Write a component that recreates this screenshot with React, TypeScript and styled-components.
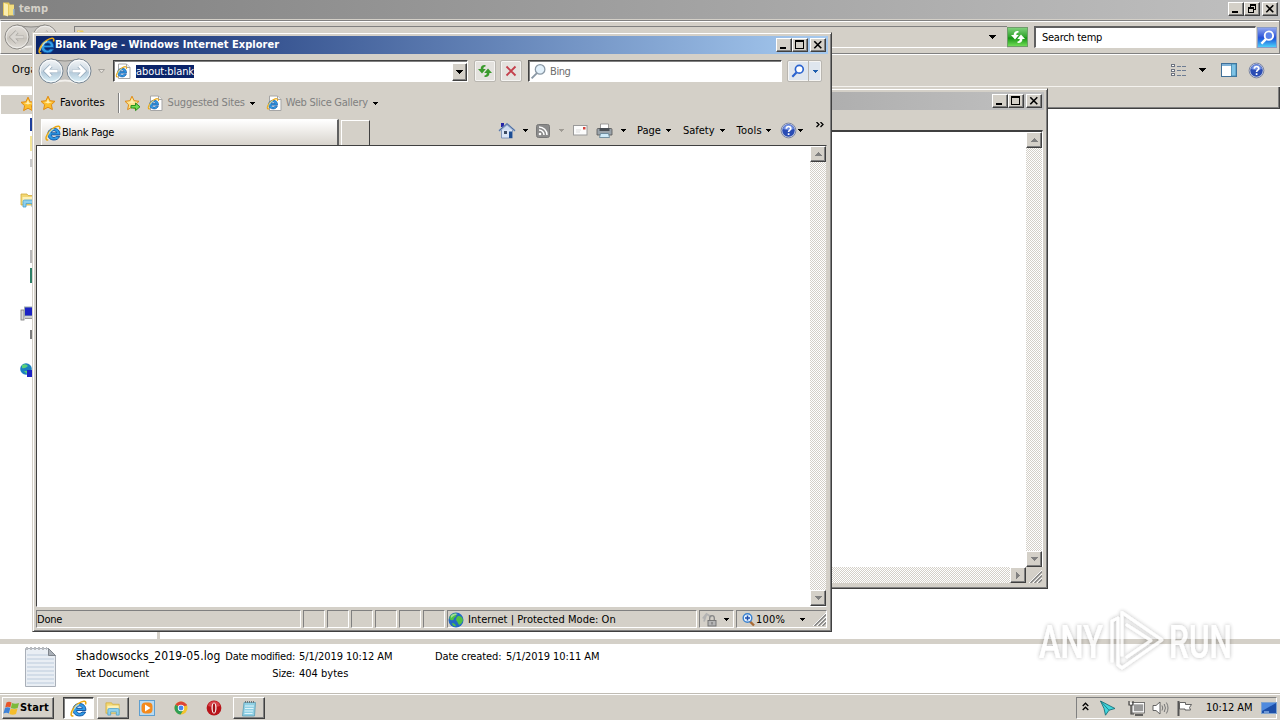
import React from 'react';
import styled, { createGlobalStyle, css } from 'styled-components';

const FACE = '#d4d0c8';
const FONT = '11px/14px Tahoma, "DejaVu Sans Condensed", "Liberation Sans", sans-serif';

const GlobalStyle = createGlobalStyle`
  * { box-sizing: border-box; }
  body { margin: 0; background: #fff; overflow: hidden; font: ${FONT}; color: #000; }
  svg { display: block; flex: none; }
`;

const raised = css`
  background: ${FACE};
  border: 1px solid;
  border-color: #fff #404040 #404040 #fff;
  box-shadow: inset -1px -1px 0 #808080;
`;

/* ---------- shared parts ---------- */

const Label = styled.span<{ $ls?: number; $color?: string; $ml?: number; $bold?: boolean; $size?: number; $mr?: number }>`
  flex: none;
  white-space: nowrap;
  letter-spacing: ${p => p.$ls ?? 0}px;
  color: ${p => p.$color ?? '#000'};
  margin-left: ${p => p.$ml ?? 0}px;
  margin-right: ${p => p.$mr ?? 0}px;
  font-weight: ${p => (p.$bold ? 'bold' : 'normal')};
  font-size: ${p => p.$size ?? 11}px;
`;

const Gap = styled.div<{ $w: number }>`
  flex: none;
  width: ${p => p.$w}px;
`;

const Spacer = styled.div`
  flex: 1;
`;

const Desktop = styled.main`
  position: relative;
  width: 1280px;
  height: 720px;
  overflow: hidden;
  display: flex;
  flex-direction: column;
  background: #fff;
`;

const CaptionBox = styled.span`
  ${raised}
  width: 16px;
  height: 14px;
  display: flex;
  align-items: center;
  justify-content: center;
`;

const CaptionGroup = styled.div`
  display: flex;
  margin-left: auto;
  & > :last-child { margin-left: 2px; }
`;

function Caption({ restore }: { restore?: boolean }) {
  return (
    <CaptionGroup>
      <CaptionBox>
        <svg width="12" height="10" shapeRendering="crispEdges"><rect x="2" y="7" width="6" height="2" /></svg>
      </CaptionBox>
      <CaptionBox>
        {restore ? (
          <svg width="12" height="10" shapeRendering="crispEdges" fill="none" stroke="#000">
            <path d="M4.5 3V.5h5v5H8M4 1.5h6M2.5 3.5h5v5h-5zM2 4.5h6" />
          </svg>
        ) : (
          <svg width="12" height="10" shapeRendering="crispEdges" fill="none" stroke="#000">
            <path d="M1.5 .5h8v8h-8zM1 1.5h9" />
          </svg>
        )}
      </CaptionBox>
      <CaptionBox>
        <svg width="12" height="10" fill="none" stroke="#000" strokeWidth="1.6"><path d="M2.3 1.3l7 7M9.3 1.3l-7 7" /></svg>
      </CaptionBox>
    </CaptionGroup>
  );
}

const Arrow = ({ color = '#000', small }: { color?: string; small?: boolean }) =>
  small ? (
    <svg width="5" height="3" shapeRendering="crispEdges"><path d="M0 0h5v1H4v1H3v1H2V2H1V1H0z" fill={color} /></svg>
  ) : (
    <svg width="7" height="4" shapeRendering="crispEdges"><path d="M0 0h7v1H6v1H5v1H4v1H3V3H2V2H1V1H0z" fill={color} /></svg>
  );

/* ---------- icons ---------- */

const IeGlyph = () => (
  <>
    <path
      d="M14.900 9.900H6.200C6.300 11.600 7.500 12.500 9 12.500c1.100 0 1.900-.4 2.300-1.200h3.300C13.800 13.700 11.800 15 9 15 5.300 15 2.800 12.700 2.800 9.200 2.800 5.700 5.400 3.300 9 3.300c3.800 0 6.100 2.600 5.900 6.600zM11.600 7.800C11.400 6.500 10.400 5.700 9 5.700c-1.400 0-2.400.8-2.700 2.100z"
      fill="#2f9be6"
      stroke="#0d4f9e"
      strokeWidth=".9"
      fillRule="evenodd"
    />
    <path d="M3.200 14.900C.6 15.600.4 12.800 2.400 9.400 5 5 10.600 .8 13.600 1.200c1.500.2 1.500 1.700.9 3" fill="none" stroke="#e9a713" strokeWidth="1.500" />
    <path d="M2.200 13C2 11 4.500 6.800 8.400 4" fill="none" stroke="#fbe27a" strokeWidth=".8" />
    <path d="M4.300 8.500C4.600 6.300 6.300 4.700 8.500 4.400" fill="none" stroke="#a5dcfa" strokeWidth="1" />
  </>
);

const IeMark = ({ size = 16 }: { size?: number }) => (
  <svg width={size} height={size} viewBox="0 0 16 16"><IeGlyph /></svg>
);

const IePage = () => (
  <svg width="17" height="17" viewBox="0 0 17 17">
    <path d="M3.500 1h8l3.500 3.500v11h-11.500z" fill="#fff" stroke="#a5a5a5" />
    <path d="M11.500 1v3.500H15" fill="#eee" stroke="#a5a5a5" />
    <g transform="translate(.5 2.800) scale(.74)"><IeGlyph /></g>
  </svg>
);

const Star = ({ add }: { add?: boolean }) => (
  <svg width="17" height="17" viewBox="0 0 17 17">
    <path d="M8 1.2l2.1 4.5 4.9.6-3.6 3.4 1 4.9L8 12.2l-4.4 2.4 1-4.9L1 6.3l4.9-.6z" fill={add ? '#fbe08a' : '#fcbf2c'} stroke="#e08b14" strokeWidth="1" strokeLinejoin="round" />
    <path d="M8 3.500L9.200 6.700l3 .4L8 8.500l-4-1.400 2.700-.4z" fill="#ffeeb0" />
    {add && <path d="M7 10.500h4.500V8l4.500 3.800-4.500 3.800v-2.600H7z" fill="#6fdc4f" stroke="#2c8f1f" strokeWidth="1" />}
  </svg>
);

const NavPair = ({ dim }: { dim?: boolean }) => (
  <svg width="56" height="28" viewBox="0 0 56 28">
    <defs>
      <linearGradient id={dim ? 'nd' : 'nb'} x1="0" y1="0" x2="0" y2="1">
        <stop offset="0" stopColor={dim ? '#e2dfda' : '#f4f6f8'} />
        <stop offset=".5" stopColor={dim ? '#cfcbc4' : '#ccd8e2'} />
        <stop offset=".55" stopColor={dim ? '#c6c2ba' : '#b4c9d9'} />
        <stop offset="1" stopColor={dim ? '#e2dfda' : '#dff4fb'} />
      </linearGradient>
    </defs>
    <path d="M14 2Q28 5 42 2V26Q28 22 14 26z" fill="#c4c2be" />
    <path d="M14 2Q28 6 42 2" stroke="#8e8c88" fill="none" />
    <path d="M16 26Q28 21 40 26" stroke="#f2f0ec" strokeWidth="2" fill="none" />
    {[14, 42].map(cx => (
      <g key={cx}>
        <circle cx={cx} cy="14" r="12" fill={`url(#${dim ? 'nd' : 'nb'})`} stroke={dim ? '#8f8d89' : '#7c8894'} />
        <circle cx={cx} cy="14" r="10.800" fill="none" stroke="#fff" strokeOpacity={dim ? 0.5 : 0.85} />
      </g>
    ))}
    <path d="M20.500 14H9.500M14 8.700L8.800 14l5.200 5.300" fill="none" stroke={dim ? '#a5a29d' : '#8fa5b8'} strokeWidth="4.200" />
    <path d="M20.500 14H9.500M14 8.700L8.800 14l5.200 5.300" fill="none" stroke={dim ? '#d9d6d1' : '#fff'} strokeWidth="2.800" />
    <path d="M35.500 14h11M42 8.700l5.200 5.300-5.200 5.300" fill="none" stroke={dim ? '#a5a29d' : '#8fa5b8'} strokeWidth="4.200" />
    <path d="M35.500 14h11M42 8.700l5.200 5.300-5.200 5.300" fill="none" stroke={dim ? '#d9d6d1' : '#fff'} strokeWidth="2.800" />
  </svg>
);

const RefreshArrows = ({ color }: { color: string }) => (
  <svg width="16" height="14" viewBox="0 0 16 14">
    <path d="M8.500 1C5.500 .6 3.600 2.200 3.700 5H1l4 4.400L8.800 5H6.300c0-1.500.7-2.300 2.200-2.500z" fill={color} />
    <path d="M7.500 13c3 .4 5-1.200 4.900-4H15L11 4.600 7.200 9h2.600c0 1.500-.8 2.300-2.300 2.500z" fill={color} />
  </svg>
);

const Magnifier = ({ color, glass = 'none', w = 2, size = 16 }: { color: string; glass?: string; w?: number; size?: number }) => (
  <svg width={size} height={size} viewBox="0 0 16 16">
    <path d="M6.500 9.500L1.500 14.500" stroke={color} strokeWidth={w + 0.6} />
    <circle cx="9.500" cy="6" r="4.500" fill={glass} stroke={color} strokeWidth={w} />
  </svg>
);

const HelpDot = () => (
  <svg width="17" height="17" viewBox="0 0 17 17">
    <circle cx="8.500" cy="8.500" r="7.400" fill="#c9cfe0" stroke="#7d87a5" />
    <circle cx="8.500" cy="8.500" r="6.200" fill="#2a4cb4" />
    <path d="M3 7a5.600 5.600 0 0 1 11 0q-5.500 2-11 0z" fill="#6f8de0" />
    <path d="M6.300 6.800c0-3 4.500-3 4.500-.3 0 1.700-2.200 1.700-2.200 3.400M8.600 11.200v1.700" stroke="#fff" strokeWidth="1.700" fill="none" />
  </svg>
);

const FolderIcon = () => (
  <svg width="16" height="16" viewBox="0 0 16 16">
    <path d="M2 1.500h6l1 2h4v11H2z" fill="#e8c95b" />
    <path d="M3 2l4 1.500v12L3 14z" fill="#fbeeb0" />
    <path d="M8 4h5v10H8z" fill="#f3dd7f" />
    <path d="M12 8h1.500v6H12z" fill="#9cb8c9" />
  </svg>
);

const LibraryIcon = ({ size = 18 }: { size?: number }) => (
  <svg width={size} height={size} viewBox="0 0 18 18">
    <path d="M1 3h6l1 1.500h7V14H1z" fill="#f2d772" stroke="#d2ab3c" strokeWidth=".8" />
    <path d="M2.500 6h12v7h-12z" fill="#fdf1b8" />
    <path d="M3 16V10.500q0-1.500 1.500-1.500h9q1.500 0 1.500 1.500V16h-3v-3.500H6V16z" fill="#8ed0ee" stroke="#4a9fc9" strokeWidth=".8" />
  </svg>
);

const HomeIcon = () => (
  <svg width="18" height="17" viewBox="0 0 18 17">
    <path d="M3.500 7.500h11V16h-11z" fill="#dce6f5" stroke="#6f87b0" strokeWidth=".8" />
    <path d="M3 1h3v4H3z" fill="#2424a8" />
    <path d="M9 2.500L15 8H3z" fill="#cfdcef" />
    <path d="M1 9l8-7 8 7" fill="none" stroke="#8fa6c8" strokeWidth="2" />
    <path d="M1 8.700l8-7 8 7" fill="none" stroke="#31538e" strokeWidth=".7" />
    <path d="M11 9.500h3V16h-3z" fill="#1c4d93" />
    <path d="M6 9h3v3H6z" fill="#3f4d63" />
  </svg>
);

const RssIcon = () => (
  <svg width="14" height="14" viewBox="0 0 14 14">
    <rect x=".5" y=".5" width="13" height="13" rx="2" fill="#8b8b8b" stroke="#777" />
    <circle cx="4" cy="10" r="1.300" fill="#fff" />
    <path d="M3 6a5 5 0 0 1 5 5M3 3a8 8 0 0 1 8 8" fill="none" stroke="#fff" strokeWidth="1.500" />
  </svg>
);

const MailIcon = () => (
  <svg width="15" height="11" viewBox="0 0 15 11">
    <rect x=".5" y=".5" width="13.500" height="9.500" fill="#fcfcfc" stroke="#9a9a9a" />
    <rect x="10" y="2" width="2.500" height="2.500" fill="#d4453c" />
    <path d="M3 5h5M3 7h4" stroke="#ddd" />
  </svg>
);

const PrinterIcon = () => (
  <svg width="17" height="16" viewBox="0 0 17 16">
    <path d="M4.500 1h8v5h-8z" fill="#fff" stroke="#888" strokeWidth=".8" />
    <path d="M1 6.500q0-1 1-1h13q1 0 1 1V12H1z" fill="#9aa3aa" stroke="#555" strokeWidth=".8" />
    <path d="M3.500 5h10v3h-10z" fill="#4a4f55" />
    <path d="M4.500 10.500h8l1 4h-10z" fill="#cfeaf8" stroke="#5d7d90" strokeWidth=".8" />
  </svg>
);

const Globe = ({ size = 16 }: { size?: number }) => (
  <svg width={size} height={size} viewBox="0 0 16 16">
    <circle cx="8" cy="8" r="7.500" fill="#2468c4" />
    <path d="M2 4Q5 .5 8.500 1.500 9 4 6 6 6 9 3 8 .5 7 2 4zM10 4q4-.5 5 4-1 4-4 5-2-4-3-5 0-3 2-4zM4 11q3 0 4 3-3 1-4-3z" fill="#4fc244" />
    <path d="M3 3.500Q6 .5 10 2 6 3 3 6z" fill="#fff" fillOpacity=".45" />
  </svg>
);

const Grip = () => (
  <svg width="13" height="13" viewBox="0 0 13 13">
    <path d="M0 13L13 0M4 13l9-9M8 13l5-5" stroke="#fff" strokeWidth="1" />
    <path d="M1.500 13L13 1.500M5.500 13L13 5.500M9.500 13L13 9.500" stroke="#808080" strokeWidth="1.300" />
  </svg>
);

/* ---------- scroll bars ---------- */

const dither = css`
  background: repeating-conic-gradient(#fff 0 25%, ${FACE} 0 50%) 0 0 / 2px 2px;
`;

const ScrollColumn = styled.div`
  ${dither}
  width: 16px;
  display: flex;
  flex-direction: column;
  justify-content: space-between;
  flex: none;
`;

const ScrollButton = styled.div`
  ${raised}
  width: 16px;
  height: 16px;
  display: flex;
  align-items: center;
  justify-content: center;
`;

const Up = () => <svg width="7" height="4" shapeRendering="crispEdges"><path d="M3 0h1v1h1v1h1v1h1v1H0V3h1V2h1V1h1z" fill="#808080" /></svg>;
const Right = () => <svg width="4" height="7" shapeRendering="crispEdges"><path d="M0 0h1v1h1v1h1v1h1v1H3v1H2v1H1v1H0z" fill="#808080" /></svg>;

const VScroll = () => (
  <ScrollColumn>
    <ScrollButton><Up /></ScrollButton>
    <ScrollButton><Arrow color="#808080" /></ScrollButton>
  </ScrollColumn>
);

/* ---------- explorer (maximised) ---------- */

const Explorer = styled.section`
  flex: 1;
  display: flex;
  flex-direction: column;
`;

const ExplorerTitle = styled.header`
  height: 19px;
  display: flex;
  align-items: center;
  padding: 0 2px 1px 1px;
  background: linear-gradient(90deg, #808080, #c0c0c0);
`;

const AddressBand = styled.div`
  height: 34px;
  margin-top: 1px;
  border: 1px solid #808080;
  border-left-color: #fff;
  background: ${FACE};
  box-shadow: inset 0 1px 0 #fff, 0 1px 0 #fff;
  display: flex;
  align-items: center;
  padding: 0 2px 0 2px;
  outline: 1px solid ${FACE};
`;

const PathBox = styled.div`
  flex: 1;
  height: 22px;
  margin-left: 15px;
  border: 1px solid #808080;
  border-bottom-color: #fff;
  border-right: 0;
  display: flex;
  align-items: center;
`;

const GreenButton = styled.div`
  width: 21px;
  height: 20px;
  border: 1px solid #6f9d6a;
  background: linear-gradient(#7fd07a, #2fa32c 50%, #149313 55%, #6fdc55);
  display: flex;
  align-items: center;
  justify-content: center;
`;

const ExplorerSearch = styled.div`
  width: 222px;
  height: 22px;
  margin-left: 6px;
  border: 1px solid;
  border-width: 2px 1px 1px 2px;
  border-color: #606060 #fff #fff #606060;
  background: #fff;
  display: flex;
  align-items: center;
  padding-left: 6px;
`;

const BlueButton = styled.div`
  width: 20px;
  height: 21px;
  margin-left: 1px;
  border: 1px solid #8a9cc8;
  background: linear-gradient(#8fa5ee, #2b53d8 50%, #1e63e0 60%, #4fd0f8);
  display: flex;
  align-items: center;
  justify-content: center;
`;

const CommandBand = styled.div`
  height: 33px;
  background: ${FACE};
  border-bottom: 1px solid #f4f2ee;
  border-top: 1px solid #fff;
  display: flex;
  align-items: center;
  padding: 0 15px 1px 12px;
`;

const ExplorerBody = styled.div`
  flex: 1;
  display: flex;
`;

const NavPane = styled.nav`
  width: 160px;
  border-right: 3px solid ${FACE};
  padding-top: 8px;
`;

const NavItem = styled.div<{ $top?: number; $active?: boolean; $pad?: number }>`
  height: 19px;
  margin-left: 1px;
  margin-top: ${p => p.$top ?? 0}px;
  padding-left: ${p => p.$pad ?? 18}px;
  display: flex;
  align-items: center;
  background: ${p => (p.$active ? FACE : 'transparent')};
`;

const NavChip = styled.i<{ $c: string; $h?: number }>`
  width: 12px;
  height: ${p => p.$h ?? 13}px;
  background: ${p => p.$c};
`;

const FilePane = styled.div`
  flex: 1;
  background: #fff;
`;

const ColumnHeader = styled.div`
  height: 22px;
  ${raised}
  border-left: 0;
  border-top: 0;
`;

const DetailsPane = styled.footer`
  height: 54px;
  border-top: 5px solid ${FACE};
  background: #fff;
  display: flex;
  padding: 2px 0 0 24px;
`;

const FileMeta = styled.div`
  margin-left: 19px;
  padding-top: 3px;
  display: grid;
  grid-template-columns: 150px 69px 2px 134px 71px 100px;
  grid-auto-rows: 18px;
  row-gap: 0;
  align-items: baseline;
  align-content: start;
`;

const MetaName = styled.div`
  text-align: right;
  white-space: nowrap;
  display: flex;
  justify-content: flex-end;
`;

/* ---------- floating windows ---------- */

const Frame = styled.section<{ $x: number; $y: number; $w: number; $h: number }>`
  position: absolute;
  left: ${p => p.$x}px;
  top: ${p => p.$y}px;
  width: ${p => p.$w}px;
  height: ${p => p.$h}px;
  background: ${FACE};
  border: 1px solid;
  border-color: ${FACE} #404040 #404040 ${FACE};
  box-shadow: inset 1px 1px 0 #fff, inset -1px -1px 0 #808080;
  padding: 3px;
  display: flex;
  flex-direction: column;
`;

const TitleBar = styled.header<{ $from: string; $to: string }>`
  height: 18px;
  flex: none;
  display: flex;
  align-items: center;
  padding: 0 2px;
  background: linear-gradient(90deg, ${p => p.$from}, ${p => p.$to});
`;

const MenuStrip = styled.div`
  height: 20px;
  flex: none;
`;

const EditArea = styled.div`
  flex: 1;
  display: flex;
  margin-right: 1px;
  border: 1px solid #808080;
  border-top: 2px solid #404040;
  border-right-color: #fff;
  border-bottom: 0;
  background: #fff;
`;

const EditText = styled.div`
  flex: 1;
  background: #fff;
`;

const BottomRow = styled.div`
  height: 16px;
  flex: none;
  display: flex;
  margin-bottom: 2px;
  margin-right: 2px;
`;

const HTrack = styled.div`
  ${dither}
  flex: 1;
  display: flex;
  justify-content: flex-end;
`;

const GripCell = styled.div`
  width: 16px;
  display: flex;
  align-items: flex-end;
  justify-content: flex-end;
`;

/* ---------- browser ---------- */

const NavRow = styled.div`
  height: 34px;
  flex: none;
  display: flex;
  align-items: center;
  padding-left: 1px;
`;

const Field = styled.div<{ $w: number; $ml: number }>`
  width: ${p => p.$w}px;
  height: 22px;
  flex: none;
  margin-left: ${p => p.$ml}px;
  background: #fff;
  border: 1px solid;
  border-color: #404040 #fff #fff #404040;
  box-shadow: inset 1px 1px 0 #808080;
  display: flex;
  align-items: center;
  padding: 1px 0 0 1px;
`;

const Selected = styled(Label)`
  background: #0a246a;
  margin-left: 4px;
  height: 13px;
  line-height: 13px;
`;

const DropButton = styled.div`
  ${raised}
  width: 15px;
  height: 18px;
  margin-left: auto;
  display: flex;
  align-items: center;
  justify-content: center;
`;

const ToolButton = styled.div<{ $w: number; $ml: number; $blue?: boolean }>`
  width: ${p => p.$w}px;
  height: 22px;
  margin-left: ${p => p.$ml}px;
  flex: none;
  border: 1px solid #b9b6b0;
  border-radius: 2px;
  box-shadow: inset 0 0 0 1px #f6f5f3;
  background: ${p => (p.$blue ? '#dfe6ee' : '#e4e2de')};
  display: flex;
  align-items: center;
  justify-content: center;
`;

const SplitHalf = styled.div<{ $w: number; $line?: boolean }>`
  width: ${p => p.$w}px;
  height: 20px;
  display: flex;
  align-items: center;
  justify-content: center;
  border-left: ${p => (p.$line ? '1px solid #b9b6b0' : '0')};
`;

const FavRow = styled.div`
  height: 29px;
  flex: none;
  display: flex;
  align-items: center;
  padding: 1px 0 0 4px;
`;

const Divider = styled.div`
  width: 2px;
  height: 20px;
  border-left: 1px solid #808080;
  border-right: 1px solid #fff;
`;

const TabRow = styled.div`
  height: 28px;
  flex: none;
  display: flex;
  align-items: flex-end;
  padding-left: 5px;
`;

const Tab = styled.div`
  width: 298px;
  height: 26px;
  border: 1px solid #fff;
  border-bottom: 0;
  border-right: 2px solid #606060;
  background: linear-gradient(#fff, #f0eeeb 40%, #d8d4cd);
  display: flex;
  align-items: center;
  padding: 1px 0 0 3px;
`;

const NewTab = styled.div`
  width: 29px;
  height: 25px;
  margin-left: 2px;
  border: 1px solid #fff;
  border-bottom: 0;
  border-right: 1px solid #404040;
`;

const CommandBar = styled.div`
  flex: 1;
  height: 28px;
  display: flex;
  align-items: center;
  padding: 0 4px 1px 0;
`;

const Viewport = styled.div`
  flex: 1;
  display: flex;
  margin-right: 1px;
  border: 1px solid #404040;
  border-right-color: ${FACE};
  border-bottom-color: #fff;
  box-shadow: inset 0 1px 0 #808080;
  background: #fff;
`;

const StatusBar = styled.div`
  height: 18px;
  flex: none;
  margin-top: 3px;
  display: flex;
  align-items: center;
  gap: 2px;
`;

const StatusCell = styled.div<{ $w: number }>`
  width: ${p => p.$w}px;
  height: 18px;
  flex: none;
  display: flex;
  align-items: center;
  border: 1px solid #808080;
  border-right-color: #fff;
  border-bottom-color: #fff;
  padding-top: 1px;
`;

/* ---------- taskbar ---------- */

const Taskbar = styled.div`
  height: 27px;
  flex: none;
  background: ${FACE};
  border-top: 1px solid #c0bcb4;
  box-shadow: inset 0 1px 0 #fff;
  display: flex;
  align-items: center;
  padding: 2px 3px 0 2px;
`;

const StartButton = styled.div`
  ${raised}
  width: 52px;
  height: 22px;
  display: flex;
  align-items: center;
`;

const TaskButton = styled.div<{ $ml?: number; $w?: number; $state?: 'open' | 'active' }>`
  width: ${p => p.$w ?? 31}px;
  height: 22px;
  margin-left: ${p => p.$ml ?? 0}px;
  display: flex;
  align-items: center;
  justify-content: center;
  ${p => p.$state === 'open' && raised}
  ${p =>
    p.$state === 'active' &&
    css`
      background: #fff;
      border: 1px solid;
      border-color: #404040 #fff #fff #404040;
      box-shadow: inset 1px 1px 0 #808080;
    `}
`;

const Tray = styled.div`
  width: 201px;
  height: 22px;
  margin-left: auto;
  border: 1px solid #808080;
  border-right-color: #fff;
  border-bottom-color: #fff;
  display: flex;
  align-items: center;
  padding-left: 5px;
`;

const Watermark = styled.div`
  position: absolute;
  left: 1030px;
  top: 600px;
  pointer-events: none;
`;

function ExplorerWindow() {
  return (
    <Explorer>
      <ExplorerTitle>
        <FolderIcon />
        <Label $bold $color={FACE} $ls={0.04} $ml={2}>temp</Label>
        <Caption restore />
      </ExplorerTitle>
      <AddressBand>
        <NavPair dim />
        <PathBox>
          <FolderIcon />
          <Spacer />
          <Arrow />
          <Gap $w={11} />
        </PathBox>
        <GreenButton><RefreshArrows color="#fff" /></GreenButton>
        <ExplorerSearch><Label $ls={-0.27}>Search temp</Label></ExplorerSearch>
        <BlueButton><Magnifier color="#fff" glass="#5b83ea" size={15} /></BlueButton>
      </AddressBand>
      <CommandBand>
        <Label $ls={0.2}>Organize</Label>
        <Spacer />
        <svg width="16" height="13" viewBox="0 0 16 13" shapeRendering="crispEdges">
          <path d="M1.500 .5h3v2h-3zM1.500 5h3v2h-3zM1.500 9.500h3v2h-3z" fill="#fff" stroke="#6d7380" />
          <path d="M7 2h4M12 2h4M7 6.500h4M12 6.500h4M7 11h4M12 11h4" stroke="#6d7c93" />
        </svg>
        <Gap $w={13} />
        <Arrow />
        <Gap $w={15} />
        <svg width="16" height="14" viewBox="0 0 16 14">
          <rect x=".5" y=".5" width="15" height="13" fill="#fff" stroke="#3f6f98" />
          <path d="M1 2h14" stroke="#7fb2d8" strokeWidth="2" />
          <rect x="10.500" y="1" width="4.500" height="12" fill="#7ec3e6" stroke="#3f85ab" strokeWidth=".8" />
        </svg>
        <Gap $w={11} />
        <HelpDot />
      </CommandBand>
      <ExplorerBody>
        <NavPane>
          <NavItem $active $pad={19}><Star /></NavItem>
          <NavItem $pad={29} $top={1}><NavChip $c="#1f3f9c" /></NavItem>
          <NavItem $pad={29}><NavChip $c="#f3e59a" $h={15} /></NavItem>
          <NavItem $pad={29}><NavChip $c="#c9c9c9" $h={8} /></NavItem>
          <NavItem $pad={19} $top={18}><LibraryIcon /></NavItem>
          <NavItem $pad={29} $top={38}><NavChip $c="#b8b8b8" /></NavItem>
          <NavItem $pad={29}><NavChip $c="#2e7f66" $h={15} /></NavItem>
          <NavItem $top={19}>
            <svg width="18" height="16" viewBox="0 0 18 16">
              <rect x="2" y="4" width="3" height="10" fill="#d8d8d8" stroke="#777" strokeWidth=".8" />
              <rect x="5.500" y="1" width="12" height="9" fill="#1b22c4" stroke="#9aa" />
              <path d="M6 13h10v-1.500H6z" fill="#999" />
            </svg>
          </NavItem>
          <NavItem $pad={29} $top={2}><NavChip $c="#7c7c7c" $h={9} /></NavItem>
          <NavItem $top={17}>
            <svg width="18" height="18" viewBox="0 0 18 18">
              <circle cx="7" cy="7" r="5.800" fill="#1b7fc0" />
              <path d="M3 3q4-2 6 1-3 3-6 2zM5 9h4l-1 3z" fill="#59d07a" />
              <rect x="8" y="8" width="9" height="7" fill="#1b22c4" />
            </svg>
          </NavItem>
        </NavPane>
        <FilePane><ColumnHeader /></FilePane>
      </ExplorerBody>
      <DetailsPane>
        <svg width="33" height="42" viewBox="0 0 33 42">
          <path d="M1.500 2.500h23l7 7v31h-30z" fill="#e9eef4" stroke="#a9afb8" />
          <path d="M3 9h22M3 13h27M3 17h27M3 21h27M3 25h27M3 29h27M3 33h27M3 37h27" stroke="#bccbdc" />
          <path d="M24.500 2.500v7h7z" fill="#aab0b8" stroke="#7f858c" />
          <path d="M2 2.500h21" stroke="#b9bcc0" strokeDasharray="2 2" strokeWidth="3" />
        </svg>
        <FileMeta>
          <Label $size={12} $ls={0.12}>shadowsocks_2019-05.log</Label>
          <MetaName><Label $ls={-0.27}>Date modified:</Label></MetaName>
          <i />
          <Label $ls={-0.07} $ml={2}>5/1/2019 10:12 AM</Label>
          <Label $ml={4} $ls={-0.1}>Date created:</Label>
          <Label $ml={4} $ls={-0.07}>5/1/2019 10:11 AM</Label>
          <Label $ls={-0.09}>Text Document</Label>
          <MetaName><Label $ls={-0.2}>Size:</Label></MetaName>
          <i />
          <Label $ml={2}>404 bytes</Label>
        </FileMeta>
      </DetailsPane>
    </Explorer>
  );
}

function NotepadWindow() {
  return (
    <Frame $x={250} $y={88} $w={798} $h={501}>
      <TitleBar $from="#808080" $to="#c0c0c0"><Caption /></TitleBar>
      <MenuStrip />
      <EditArea>
        <EditText />
        <VScroll />
      </EditArea>
      <BottomRow>
        <HTrack><ScrollButton><Right /></ScrollButton></HTrack>
        <GripCell><Grip /></GripCell>
      </BottomRow>
    </Frame>
  );
}

function BrowserWindow() {
  return (
    <Frame $x={32} $y={32} $w={800} $h={600}>
      <TitleBar $from="#0a246a" $to="#a6caf0">
        <IeMark size={17} />
        <Label $bold $color="#fff" $ls={0.04}>Blank Page - Windows Internet Explorer</Label>
        <Caption />
      </TitleBar>
      <NavRow>
        <NavPair />
        <Gap $w={5} />
        <svg width="7" height="5" viewBox="0 0 7 5"><path d="M.5 .5h6L3.500 4z" fill="#e4e1dc" stroke="#a5a29c" /></svg>
        <Field $w={355} $ml={8}>
          <IePage />
          <Selected $color="#fff" $ls={-0.09}>about:blank</Selected>
          <DropButton><Arrow /></DropButton>
        </Field>
        <ToolButton $w={22} $ml={6}><RefreshArrows color="#3a9a2c" /></ToolButton>
        <ToolButton $w={22} $ml={4}>
          <svg width="12" height="12" viewBox="0 0 12 12"><path d="M1.500 1.500l9 9M10.500 1.500l-9 9" stroke="#c4404c" strokeWidth="1.900" /></svg>
        </ToolButton>
        <Field $w={254} $ml={6}>
          <Magnifier color="#8a98a5" glass="#e3f1fb" w={1.2} size={17} />
          <Label $color="#6d6d6d" $ml={3} $ls={-0.4}>Bing</Label>
        </Field>
        <ToolButton $w={35} $ml={5} $blue>
          <SplitHalf $w={20}><Magnifier color="#2a63cf" glass="#fff" w={1.9} size={14} /></SplitHalf>
          <SplitHalf $w={13} $line><Arrow small color="#1f5fae" /></SplitHalf>
        </ToolButton>
      </NavRow>
      <FavRow>
        <Star />
        <Label $ml={3}>Favorites</Label>
        <Gap $w={13} />
        <Divider />
        <Gap $w={4} />
        <Star add />
        <Gap $w={6} />
        <IePage />
        <Label $color="#808080" $ml={4} $ls={-0.18} $mr={5}>Suggested Sites</Label>
        <Arrow small />
        <Gap $w={11} />
        <IePage />
        <Label $color="#808080" $ml={3} $ls={-0.26} $mr={5}>Web Slice Gallery</Label>
        <Arrow small />
      </FavRow>
      <TabRow>
        <Tab>
          <IeMark size={16} />
          <Label $ls={-0.26} $ml={1}>Blank Page</Label>
        </Tab>
        <NewTab />
        <CommandBar>
          <Spacer />
          <HomeIcon />
          <Gap $w={7} />
          <Arrow small />
          <Gap $w={8} />
          <RssIcon />
          <Gap $w={9} />
          <Arrow small color="#a09c95" />
          <Gap $w={9} />
          <MailIcon />
          <Gap $w={8} />
          <PrinterIcon />
          <Gap $w={8} />
          <Arrow small />
          <Label $ml={11} $mr={5}>Page</Label>
          <Arrow small />
          <Label $ml={12} $mr={5}>Safety</Label>
          <Arrow small />
          <Label $ml={12} $ls={0.25} $mr={4}>Tools</Label>
          <Arrow small />
          <Gap $w={9} />
          <HelpDot />
          <Gap $w={1} />
          <Arrow small />
          <Gap $w={13} />
          <svg width="8" height="18" viewBox="0 0 8 18"><path d="M.5 -.5l2.500 2.500L.5 4.500M4.500 -.5L7 2 4.500 4.500" fill="none" stroke="#000" strokeWidth="1.300" transform="translate(0 .5)" /></svg>
        </CommandBar>
      </TabRow>
      <Viewport>
        <EditText />
        <VScroll />
      </Viewport>
      <StatusBar>
        <StatusCell $w={265}><Label $ls={-0.2}>Done</Label></StatusCell>
        <StatusCell $w={22} />
        <StatusCell $w={22} />
        <StatusCell $w={22} />
        <StatusCell $w={22} />
        <StatusCell $w={22} />
        <StatusCell $w={22} />
        <StatusCell $w={250}>
          <Globe />
          <Label $ml={4} $ls={0.03}>Internet | Protected Mode: On</Label>
        </StatusCell>
        <StatusCell $w={35}>
          <Gap $w={2} />
          <svg width="16" height="16" viewBox="0 0 16 16">
            <path d="M.8 6.500L4.500 2l5 3M4.500 2L2 9.500" fill="none" stroke="#b3b3b3" strokeWidth="1.800" />
            <rect x="6" y="8.500" width="8" height="5.500" fill="#b5b5b5" stroke="#6f6f6f" strokeWidth=".9" />
            <path d="M7.700 8V6a2.300 2.300 0 0 1 4.600 0v2" fill="none" stroke="#858585" strokeWidth="1.300" />
            <path d="M10 10v2.500" stroke="#666" />
          </svg>
          <Gap $w={6} />
          <Arrow small />
        </StatusCell>
        <StatusCell $w={91}>
          <Gap $w={5} />
          <svg width="14" height="14" viewBox="0 0 14 14">
            <path d="M7.500 8l4.500 4.500" stroke="#a86a35" strokeWidth="2.400" />
            <circle cx="5.500" cy="5" r="4.300" fill="#e6f3ff" stroke="#3b82cf" strokeWidth="1.400" />
            <path d="M5.500 2.500v5M3 5h5" stroke="#1d4fae" strokeWidth="1.500" />
          </svg>
          <Label $ls={0.2}>100%</Label>
          <Gap $w={15} />
          <Arrow small />
          <Spacer />
          <Grip />
        </StatusCell>
      </StatusBar>
    </Frame>
  );
}

function TaskbarStrip() {
  return (
    <Taskbar>
      <StartButton>
        <svg width="17" height="16" viewBox="0 0 17 16">
          <path d="M3.500 2.500Q6 1 8.500 2.500L7.300 7.500Q5 6.200 2.200 7.500z" fill="#e8552a" />
          <path d="M9 3Q12 4.500 16 3L14.700 8Q11.500 9.300 7.900 8z" fill="#7cba3a" />
          <path d="M2 8Q4.500 6.700 7.300 8L5.900 13.500Q3.500 12.200.4 13.500z" fill="#3f83d8" />
          <path d="M7.700 8.500Q11 10 14.500 8.500L13 14Q10 15.300 6.300 14z" fill="#f4bd2c" />
        </svg>
        <Label $bold $ls={0.15}>Start</Label>
      </StartButton>
      <TaskButton $ml={9} $state="active"><IeMark size={17} /></TaskButton>
      <TaskButton $ml={3} $w={32} $state="open"><LibraryIcon size={17} /></TaskButton>
      <TaskButton $ml={2}>
        <svg width="16" height="16" viewBox="0 0 16 16">
          <rect x=".5" y=".5" width="15" height="15" fill="#b8daf2" stroke="#5e9fd0" />
          <rect x="2.500" y="2.500" width="11" height="11" rx="4" fill="#f48a1d" />
          <path d="M6 4.500L11.500 8 6 11.500z" fill="#fff" />
        </svg>
      </TaskButton>
      <TaskButton $ml={3}>
        <svg width="14" height="14" viewBox="0 0 14 14">
          <circle cx="7" cy="7" r="6.500" fill="#f2c32e" />
          <path d="M7 7L1.400 3.800A6.500 6.500 0 0 1 12.600 3.800z" fill="#dc4437" />
          <path d="M7 7L1.400 3.700A6.500 6.500 0 0 0 6.600 13.500l3-5z" fill="#2f9e55" />
          <path d="M7 4h5.700" stroke="#dc4437" strokeWidth="1.500" />
          <circle cx="7" cy="7" r="3.200" fill="#fff" />
          <circle cx="7" cy="7" r="2.400" fill="#4585ee" />
        </svg>
      </TaskButton>
      <TaskButton $ml={2}>
        <svg width="16" height="16" viewBox="0 0 16 16">
          <circle cx="8" cy="8" r="7.400" fill="#b8141a" />
          <path d="M2 6a6.200 6.200 0 0 1 12 0q-6 2-12 0z" fill="#d8434a" />
          <ellipse cx="8" cy="8" rx="2.500" ry="5.600" fill="#fff" />
          <ellipse cx="8" cy="8" rx="1.300" ry="4.700" fill="#a51116" />
        </svg>
      </TaskButton>
      <TaskButton $ml={4} $w={32} $state="open">
        <svg width="16" height="17" viewBox="0 0 16 17">
          <path d="M3 2.500h11.500l-1 13.500H1.500z" fill="#8fd0e4" stroke="#5a9db5" strokeWidth=".8" />
          <path d="M4 6h9M4 8.500h8.500M3.500 11h8.500M3.500 13.500h8" stroke="#dff4fa" />
          <path d="M4 2h10" stroke="#6d767a" strokeDasharray="1 1" strokeWidth="2" />
        </svg>
      </TaskButton>
      <Tray>
        <svg width="7" height="12" viewBox="0 0 7 12"><path d="M.7 4l2.800-2.800L6.300 4M.7 8l2.800-2.800L6.300 8" fill="none" stroke="#000" strokeWidth="1.300" /></svg>
        <Gap $w={10} />
        <svg width="17" height="16" viewBox="0 0 17 16">
          <path d="M1.500 1L16 8.500l-6 1.700-3.500 5L5 8.500z" fill="#3fd6dd" stroke="#1c6f78" strokeWidth=".9" />
          <path d="M1.500 1L10 10.200" stroke="#1c6f78" strokeWidth=".8" />
        </svg>
        <Gap $w={12} />
        <svg width="17" height="16" viewBox="0 0 17 16">
          <rect x="5" y="3.500" width="11" height="8.500" fill="#9a9a9a" stroke="#fff" strokeWidth="1.600" />
          <rect x="4" y="2.500" width="12.500" height="10.500" fill="none" stroke="#444" strokeWidth=".7" />
          <path d="M7 15h8" stroke="#444" strokeWidth="1.600" />
          <path d="M1 1v4h4V1M3 5v9h3" fill="none" stroke="#444" strokeWidth="1.200" />
          <path d="M2 2.500h2v2H2z" fill="#fff" />
        </svg>
        <Gap $w={7} />
        <svg width="17" height="14" viewBox="0 0 17 14">
          <path d="M1 4.500h3L8 1v12L4 9.500H1z" fill="#fff" stroke="#555" strokeWidth=".9" />
          <path d="M10 4.500q1.500 2.500 0 5M12.200 3q2.500 4 0 8M14.400 1.500q3.200 5.500 0 11" fill="none" stroke="#777" strokeWidth="1" />
        </svg>
        <Gap $w={8} />
        <svg width="16" height="15" viewBox="0 0 16 15">
          <path d="M1.500 0v15" stroke="#555" strokeWidth="2" />
          <path d="M2.500 1.500h6v2h6l-2 3 1 2.500H8v-1H2.500z" fill="#fff" stroke="#555" strokeWidth=".9" />
        </svg>
        <Label $ls={-0.05} $ml={13} $mr={8}>10:12 AM</Label>
        <svg width="16" height="13" viewBox="0 0 16 13">
          <rect x=".5" y=".5" width="15" height="11" fill="#1d4fa8" stroke="#7fa3cf" />
          <path d="M1 1h14L1 9z" fill="#4f8ade" />
          <path d="M3 10h5" stroke="#bfe0ff" />
        </svg>
      </Tray>
    </Taskbar>
  );
}

export default function App() {
  return (
    <>
      <GlobalStyle />
      <Desktop>
        <ExplorerWindow />
        <NotepadWindow />
        <BrowserWindow />
        <TaskbarStrip />
        <Watermark>
          <svg width="240" height="90" viewBox="0 0 240 90">
            <defs>
              <filter id="wm" x="-10%" y="-10%" width="120%" height="120%">
                <feDropShadow dx="0" dy="0" stdDeviation="2" floodColor="#000" floodOpacity=".36" />
              </filter>
            </defs>
            <g filter="url(#wm)" fill="#fff" opacity=".82" fontFamily="Roboto, sans-serif" fontSize="47" fontWeight="500">
              <text x="9" y="58" textLength="64" lengthAdjust="spacingAndGlyphs">ANY</text>
              <text x="139" y="58" textLength="63" lengthAdjust="spacingAndGlyphs">RUN</text>
              <path d="M92 55V12.500l40 27.500-40 28-4-3V18l-6 3V61" fill="none" stroke="#fff" strokeWidth="3" strokeLinejoin="round" strokeLinecap="round" />
              <path d="M97 25l24 15.500L97 57" fill="none" stroke="#fff" strokeWidth="3" strokeLinejoin="round" strokeLinecap="round" />
            </g>
          </svg>
        </Watermark>
      </Desktop>
    </>
  );
}
